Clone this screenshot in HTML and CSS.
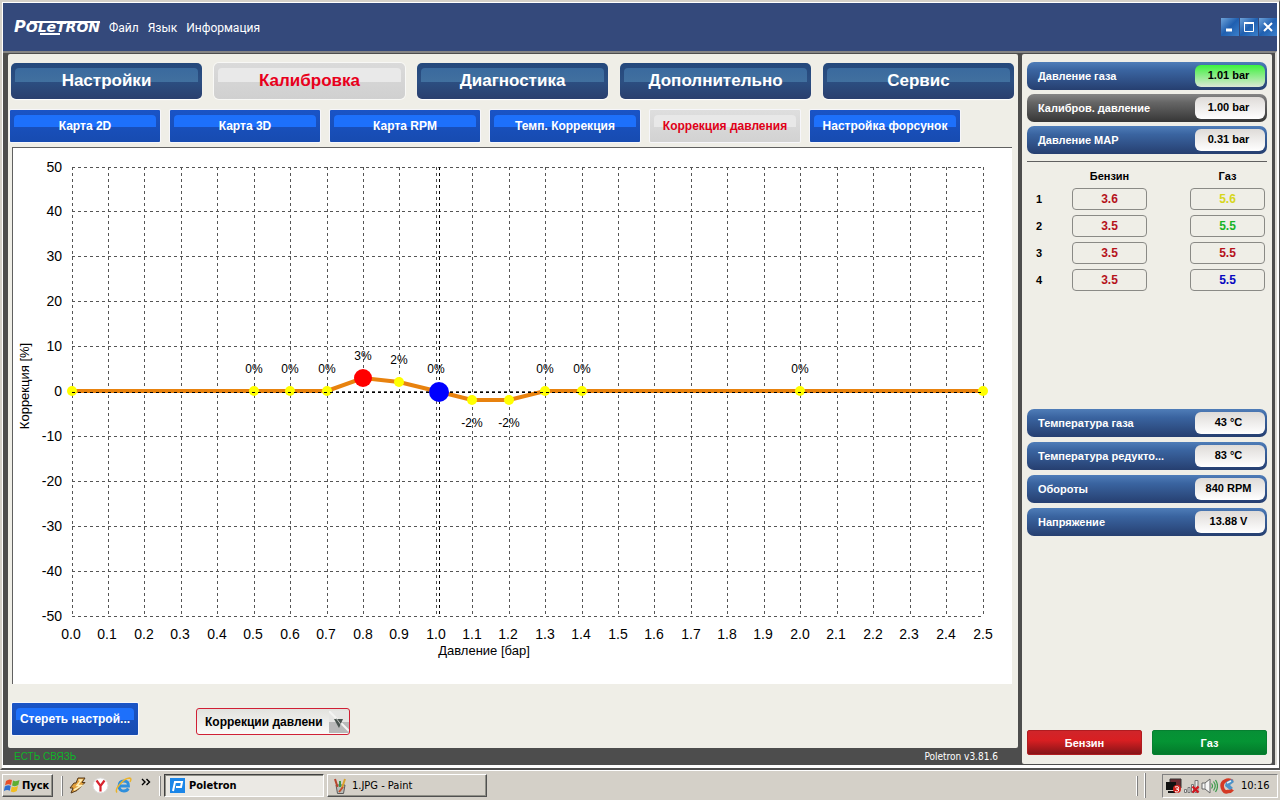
FILE: index.html
```html
<!DOCTYPE html>
<html lang="ru">
<head>
<meta charset="utf-8">
<title>Poletron</title>
<link rel="stylesheet" href="styles.css">
</head>
<body>
<div class="app">
  <header class="titlebar">
    <div class="logo"><span class="logo-cap">P</span>OLeTRON</div>
    <nav class="menu">
      <a href="#file">Файл</a>
      <a href="#lang">Язык</a>
      <a href="#info">Информация</a>
    </nav>
    <div class="winbtns">
      <button class="winbtn" aria-label="Свернуть"><svg width="18" height="18" viewBox="0 0 18 18"><path d="M5 12h6" stroke="#fff" stroke-width="3"/></svg></button>
      <button class="winbtn" aria-label="Развернуть"><svg width="18" height="18" viewBox="0 0 18 18"><path d="M4.500 5h9v8.500h-9z" fill="none" stroke="#fff"/><path d="M4 5h10" stroke="#fff" stroke-width="2"/></svg></button>
      <button class="winbtn" aria-label="Закрыть"><svg width="18" height="18" viewBox="0 0 18 18"><path d="M5 5l8 8M13 5l-8 8" stroke="#fff" stroke-width="2"/></svg></button>
    </div>
  </header>

  <div class="frame">
    <div class="left">
      <main class="panel">
        <nav class="tabs">
          <button class="tab">Настройки</button>
          <button class="tab active">Калибровка</button>
          <button class="tab">Диагностика</button>
          <button class="tab">Дополнительно</button>
          <button class="tab">Сервис</button>
        </nav>
        <nav class="subtabs">
          <button class="blue">Карта 2D</button>
          <button class="blue">Карта 3D</button>
          <button class="blue">Карта RPM</button>
          <button class="blue">Темп. Коррекция</button>
          <button class="blue active">Коррекция давления</button>
          <button class="blue">Настройка форсунок</button>
        </nav>
        <section class="chart">
          <svg class="plot" viewBox="0 0 999 536" role="img" aria-label="Коррекция давления">
            <path class="grid" d="M59 19.500h911M59 63.500h911M59 108.500h911M59 153.500h911M59 198.500h911M59 243.500h911M59 288.500h911M59 333.500h911M59 378.500h911M59 423.500h911M59 468.500h911"/>
            <path class="grid" d="M59.500 19v450M95.500 19v450M131.500 19v450M168.500 19v450M204.500 19v450M241.500 19v450M277.500 19v450M314.500 19v450M350.500 19v450M386.500 19v450M423.500 19v450M459.500 19v450M496.500 19v450M532.500 19v450M569.500 19v450M605.500 19v450M641.500 19v450M678.500 19v450M714.500 19v450M751.500 19v450M787.500 19v450M824.500 19v450M860.500 19v450M897.500 19v450M933.500 19v450M970.500 19v450"/>
            <path class="curve" d="M59 243H314L350 230L386 234L423 243L459 252H496L532 243H970"/>
            <g class="dots">
              <circle cx="59" cy="243" r="5"/><circle cx="241" cy="243" r="5"/><circle cx="277" cy="243" r="5"/><circle cx="314" cy="243" r="5"/><circle cx="386" cy="234" r="5"/><circle cx="459" cy="252" r="5"/><circle cx="496" cy="252" r="5"/><circle cx="532" cy="243" r="5"/><circle cx="569" cy="243" r="5"/><circle cx="787" cy="243" r="5"/><circle cx="970" cy="243" r="5"/>
            </g>
            <path class="cursor" d="M59 244.500h911M426.500 19v450"/>
            <circle cx="350" cy="230" r="9" fill="#f00"/>
            <circle cx="426" cy="244" r="10" fill="#00f"/>
            <g class="pts">
              <text x="241" y="225">0%</text><text x="277" y="225">0%</text><text x="314" y="225">0%</text><text x="350" y="212">3%</text><text x="386" y="216">2%</text><text x="423" y="225">0%</text><text x="459" y="279">-2%</text><text x="496" y="279">-2%</text><text x="532" y="225">0%</text><text x="569" y="225">0%</text><text x="787" y="225">0%</text>
            </g>
            <g class="ylab">
              <text x="49" y="24">50</text><text x="49" y="68">40</text><text x="49" y="113">30</text><text x="49" y="158">20</text><text x="49" y="203">10</text><text x="49" y="248">0</text><text x="49" y="293">-10</text><text x="49" y="338">-20</text><text x="49" y="383">-30</text><text x="49" y="428">-40</text><text x="49" y="473">-50</text>
            </g>
            <g class="xlab">
              <text x="58" y="491">0.0</text><text x="94" y="491">0.1</text><text x="131" y="491">0.2</text><text x="167" y="491">0.3</text><text x="204" y="491">0.4</text><text x="240" y="491">0.5</text><text x="277" y="491">0.6</text><text x="313" y="491">0.7</text><text x="350" y="491">0.8</text><text x="386" y="491">0.9</text><text x="423" y="491">1.0</text><text x="459" y="491">1.1</text><text x="495" y="491">1.2</text><text x="532" y="491">1.3</text><text x="568" y="491">1.4</text><text x="605" y="491">1.5</text><text x="641" y="491">1.6</text><text x="678" y="491">1.7</text><text x="714" y="491">1.8</text><text x="750" y="491">1.9</text><text x="787" y="491">2.0</text><text x="823" y="491">2.1</text><text x="860" y="491">2.2</text><text x="896" y="491">2.3</text><text x="933" y="491">2.4</text><text x="970" y="491">2.5</text>
            </g>
            <text class="axis" x="471" y="507">Давление [бар]</text>
            <text class="axis" transform="translate(16 238) rotate(-90)">Коррекция [%]</text>
          </svg>
        </section>
        <div class="tools">
          <button class="blue">Стереть настрой...</button>
          <label class="combo">
            <select aria-label="Режим">
              <option>Коррекции давлени</option>
            </select>
            <svg class="arrow" width="20" height="22" viewBox="0 0 20 22"><path d="M0 0h20v11H0z" fill="#e6e6e4"/><path d="M0 11h20v11H0z" fill="#b9b9b9"/><path d="M0 0l20 20" stroke="#f4f4f2" stroke-width="2"/><path d="M5 8h9l-4 9z" fill="#4a5450"/><path d="M7 7l6 8" stroke="#c8c8c6"/></svg>
          </label>
        </div>
      </main>
      <footer class="status"><span class="link-ok">ЕСТЬ СВЯЗЬ</span><span>Poletron v3.81.6</span></footer>
    </div>

    <aside class="side">
      <div class="gauges top">
        <div class="gauge"><span>Давление газа</span><output class="green">1.01 bar</output></div>
        <div class="gauge gray"><span>Калибров. давление</span><output>1.00 bar</output></div>
        <div class="gauge"><span>Давление MAP</span><output>0.31 bar</output></div>
      </div>
      <table class="inj">
        <thead><tr><th class="num"></th><th class="val">Бензин</th><th class="space"></th><th class="val">Газ</th></tr></thead>
        <tbody>
          <tr><th>1</th><td class="petrol">3.6</td><td class="space"></td><td class="yellow">5.6</td></tr>
          <tr><th>2</th><td class="petrol">3.5</td><td class="space"></td><td class="lime">5.5</td></tr>
          <tr><th>3</th><td class="petrol">3.5</td><td class="space"></td><td class="crimson">5.5</td></tr>
          <tr><th>4</th><td class="petrol">3.5</td><td class="space"></td><td class="navy">5.5</td></tr>
        </tbody>
      </table>
      <div class="gauges lower">
        <div class="gauge"><span>Температура газа</span><output>43 °C</output></div>
        <div class="gauge"><span>Температура редукто...</span><output>83 °C</output></div>
        <div class="gauge"><span>Обороты</span><output>840 RPM</output></div>
        <div class="gauge"><span>Напряжение</span><output>13.88 V</output></div>
      </div>
      <div class="fuel">
        <button class="fuelbtn red">Бензин</button>
        <button class="fuelbtn grn">Газ</button>
      </div>
    </aside>
  </div>
</div>

<div class="taskbar">
  <button class="start"><svg width="17" height="17" viewBox="0 0 17 17"><path d="M2 4q3-2.500 6-1l-1 5q-3-1.500-6 .5z" fill="#e8502a"/><path d="M9 3.500q3 1.500 6.500-.5l-1.200 5q-3 2-6.200.500z" fill="#5fae34"/><path d="M.800 9.500q3-2 6-.8l-1 5q-3-1.500-6 .5z" fill="#2f6fd0"/><path d="M7.800 9.500q3 1.500 6.200-.4l-1.200 5q-3 2-6 .4z" fill="#f2bd20"/></svg>Пуск</button>
  <span class="sep"></span>
  <div class="quick">
    <svg width="17" height="17" viewBox="0 0 17 17"><path d="M9 1h7l-3 4.500h3L8 13.500 2 16l2-5H1l4-5h2z" fill="#e2a03c" stroke="#54381a"/><path d="M9.500 3h3L8 8.500h4.500L5 13" fill="none" stroke="#fff0b8" stroke-width="1.500"/></svg>
    <svg width="17" height="17" viewBox="0 0 17 17"><circle cx="8.500" cy="8.500" r="7.500" fill="#fff" stroke="#ddd"/><path d="M4.500 3.500L8.500 9l4-5.500M8.500 9v5.500" fill="none" stroke="#d8232e" stroke-width="2.200"/></svg>
    <svg width="17" height="17" viewBox="0 0 17 17"><path d="M4 9h9.500q0-5-4.700-5T4 9.300Q4.200 14 9 14q3 0 4.300-2.500" fill="none" stroke="#2f8fdc" stroke-width="2.800"/><path d="M2 15.500C-1 12 9 1 14.500 1q2.500.3.500 4" fill="none" stroke="#eab32c" stroke-width="1.500"/></svg>
    <svg class="more" width="10" height="8" viewBox="0 0 10 8"><path d="M1 1l3 3-3 3M5.500 1l3 3-3 3" fill="none" stroke="#000" stroke-width="1.400"/></svg>
  </div>
  <span class="sep"></span>
  <button class="task current"><svg width="15" height="15" viewBox="0 0 15 15"><path d="M0 0h15v15H0z" fill="#1b86e8"/><path d="M3 13l2-9h7l-1 5H6" fill="none" stroke="#fff" stroke-width="2"/></svg>Poletron</button>
  <button class="task"><svg width="15" height="16" viewBox="0 0 15 16"><path d="M3 7h9l-1.500 8.500h-6z" fill="#b9bdb8" stroke="#5b5b5b"/><path d="M4.500 9L2 1" stroke="#b5452c" stroke-width="2"/><path d="M7 9V3" stroke="#3a9a4a" stroke-width="2"/><path d="M9 10l3-9" stroke="#d9a12c" stroke-width="2"/><path d="M6 14l4-5" stroke="#c4502c" stroke-width="2"/></svg>1.JPG - Paint</button>
  <span class="spacer"></span>
  <span class="sep"></span>
  <span class="sep dark"></span>
  <div class="tray">
    <svg width="17" height="16" viewBox="0 0 17 16"><path d="M5 1h11v9H5z" fill="#6d2b31" stroke="#333"/><path d="M1 4h10v8H1z" fill="#111"/><path d="M3 14h7" stroke="#111" stroke-width="2"/><circle cx="12" cy="11" r="4" fill="#d4231c"/><path d="M10 9q4-1 3.500 1t-2 1q3 0 2 2t-3.500.5" fill="none" stroke="#fff"/></svg>
    <svg width="17" height="16" viewBox="0 0 17 16"><path d="M1.500 11.500h2v3h-2zM5 9.500h2v5H5zM8.500 6.500h2v8h-2zM12 2.500h3v12h-3z" fill="#e8e8e8" stroke="#777"/><path d="M9.500 8.500l6 6M15.500 8.500l-6 6" stroke="#d01820" stroke-width="2.400"/></svg>
    <svg width="17" height="16" viewBox="0 0 17 16"><path d="M1 5h3l5-4v14l-5-4H1z" fill="#f6f6f6" stroke="#666"/><path d="M4 5v6" stroke="#888"/><path d="M10.500 5.500q2 2.500 0 5M12.500 3.500q3.500 4.500 0 9M14.500 2q4 6 0 12" fill="none" stroke="#3b9a4a" stroke-width="1.200"/></svg>
    <svg width="17" height="16" viewBox="0 0 17 16"><path d="M13.500 3.500Q10 1 6 3T3.500 10t5.500 3.500q3 0 4.500-2" fill="none" stroke="#d43a25" stroke-width="3.600"/><path d="M7 4l6-3 2 3-4 3 3 3-3 2-5-4z" fill="#4c92c8"/><path d="M8 5l4-2" stroke="#e8f0f5" stroke-width="1.500"/></svg>
    <time>10:16</time>
  </div>
</div>
</body>
</html>
```

FILE: styles.css
```css
* { box-sizing: border-box; }

body {
  margin: 0;
  min-height: 100vh;
  display: flex;
  flex-direction: column;
  background: #d4d0c8;
  font-family: "Liberation Sans", Arial, sans-serif;
  font-size: 12px;
  color: #000;
}

button { font-family: inherit; padding: 0; margin: 0; white-space: nowrap; }

/* Window */
.app {
  flex: 1;
  display: flex;
  flex-direction: column;
  border: 2px solid #d4d0c8;
  border-bottom: 2px solid #505050;
  border-right: 1px solid #505050;
  background: #fff;
  padding: 1px 2px 3px 1px;
}

.titlebar {
  height: 48px;
  flex: none;
  display: flex;
  align-items: center;
  background: #34497b;
  padding-left: 11px;
}

.logo {
  position: relative;
  width: 86px;
  margin-right: 9px;
  color: #fff;
  font: italic bold 14px/18px "DejaVu Sans", sans-serif;
  white-space: nowrap;
}
.logo-cap { font-size: 16px; }
.logo::before, .logo::after {
  content: "";
  position: absolute;
  background: #fff;
  height: 2px;
}
.logo::before { left: 16px; right: 0; top: 3px; }
.logo::after { left: 26px; width: 20px; bottom: 1px; }

.menu { display: flex; gap: 9px; padding-top: 2px; }
.menu a {
  color: #fff;
  text-decoration: none;
  font: 12px/18px Roboto, "Noto Sans", sans-serif;
}

.winbtns { margin-left: auto; display: flex; gap: 1px; }
.winbtn {
  width: 18px;
  height: 18px;
  border: 0;
  background: linear-gradient(135deg, #6fa3da, #1f5fb0 50%, #3a80cc);
}
.winbtn svg { display: block; }

.frame {
  flex: 1;
  display: flex;
  gap: 4px;
  border-top: 2px solid #858585;
  border-right: 2px solid #dedcd6;
  background: #4d4d4d;
  padding: 1px 3px 1px 5px;
}

.left { flex: 1; min-width: 0; display: flex; flex-direction: column; }

.panel {
  flex: 1;
  display: flex;
  flex-direction: column;
  background: #efeee7;
  border-radius: 2px;
  padding: 9px 6px 13px 3px;
}

/* Tabs */
.tabs { display: grid; grid-template-columns: repeat(5, 1fr); gap: 12px; margin-right: -2px; }
.tab {
  position: relative;
  z-index: 0;
  height: 36px;
  border: 0;
  border-radius: 5px;
  background: linear-gradient(#24487c, #2c4f82 50%, #2a3f6e);
  box-shadow: 0 1px 1px #fff;
  color: #fff;
  font-size: 17px;
  font-weight: bold;
}
.tab::before, .blue::before {
  content: "";
  position: absolute;
  z-index: -1;
  left: 4px;
  right: 4px;
  top: 5px;
  height: 14px;
  border-radius: 4px 4px 0 0;
}
.tab::before { background: linear-gradient(#3a6a9e, #41709f); }
.tab.active { background: linear-gradient(#dadada, #d0d0d0); color: #e8001c; box-shadow: 0 0 0 1px #f8f8f6; }
.tab.active::before { background: #e9e9e9; }

.subtabs {
  display: grid;
  grid-template-columns: repeat(6, minmax(0, 150fr)) 42fr;
  gap: 10px;
  margin: 11px 0 5px -1px;
}
.blue {
  position: relative;
  z-index: 0;
  height: 32px;
  border: 0;
  border-radius: 1px;
  background: linear-gradient(#1a54c6, #174bb0);
  box-shadow: 0 0 0 1px #f6f6fa;
  color: #fff;
  font-size: 12px;
  font-weight: bold;
}
.blue::before { height: 12px; background: #1d70fb; }
.blue.active { background: linear-gradient(#dedede, #d2d2d2); color: #e00018; }
.blue.active::before { background: #e8e8e8; }

/* Chart */
.chart {
  flex: 1;
  margin-left: 1px;
  border-left: 1px solid #606060;
  border-top: 1px solid #606060;
  background: #fff;
}
.plot { display: block; width: 100%; }
.plot text { fill: #000; }
.grid { stroke: #555; stroke-dasharray: 3 3; fill: none; }
.cursor { stroke: #000; stroke-dasharray: 3 3; fill: none; }
.curve { stroke: #e8820e; stroke-width: 4; fill: none; }
.dots { fill: #ff0; }
.pts { font-size: 12px; text-anchor: middle; }
.ylab { font-size: 14px; text-anchor: end; }
.xlab { font-size: 14px; text-anchor: middle; }
.axis { font-size: 13px; text-anchor: middle; }

.tools { display: flex; align-items: center; gap: 58px; padding: 18px 0 0 1px; }
.tools .blue { width: 126px; }
.combo {
  display: flex;
  align-items: center;
  width: 154px;
  height: 27px;
  margin-top: 6px;
  border: 1px solid #d02035;
  border-radius: 3px;
  background: linear-gradient(#e2e2de, #fafaf8);
}
.combo select {
  flex: 1;
  min-width: 0;
  height: 24px;
  border: 0;
  padding: 0 0 0 8px;
  appearance: none;
  background: transparent;
  color: #000;
  font: bold 12px "Liberation Sans", Arial, sans-serif;
}
.arrow { flex: none; }

.status {
  height: 16px;
  display: flex;
  align-items: center;
  justify-content: space-between;
  padding: 0 20px 0 6px;
  color: #fff;
  font-size: 10px;
}
.status span:last-child { font-family: "DejaVu Sans Condensed", "DejaVu Sans", sans-serif; }
.link-ok { color: #0fb428; }

/* Sidebar */
.side {
  width: 250px;
  flex: none;
  display: flex;
  flex-direction: column;
  background: #efeee7;
  border-radius: 2px;
  padding: 8px 5px 9px;
  font-size: 11px;
  font-weight: bold;
}
.gauges { display: flex; flex-direction: column; gap: 5px; }
.gauge {
  height: 28px;
  display: flex;
  align-items: center;
  justify-content: space-between;
  padding: 0 2px 0 11px;
  border-radius: 7px;
  background: linear-gradient(#4f7db8, #3a64a0 30%, #263f70);
  color: #fff;
}
.gauge.gray { background: linear-gradient(#858585, #666 30%, #363636); }
.gauge output {
  width: 70px;
  height: 22px;
  line-height: 21px;
  border-radius: 6px;
  background: linear-gradient(#dedbd8, #fff);
  color: #000;
  text-align: center;
  padding-right: 3px;
}
.gauge output.green { background: linear-gradient(#3df23d, #dce8d6); }
.gauges.top { gap: 4px; padding-bottom: 7px; border-bottom: 1px solid #606060; }

.inj {
  width: 238px;
  margin: 2px 0 113px;
  border-collapse: separate;
  border-spacing: 0 5px;
  table-layout: fixed;
}
.inj th, .inj td { height: 22px; padding: 0; text-align: center; }
.inj thead th { height: 14px; }
.inj .num { width: 45px; }
.inj tbody th { text-align: left; padding-left: 9px; }
.inj .val { width: 75px; }
.inj td { border: 1px solid #8a8a86; border-radius: 4px; font-size: 12px; }
.inj td.space { border: 0; }
.petrol, .crimson { color: #b5121b; }
.yellow { color: #d6d61c; }
.lime { color: #18b428; }
.navy { color: #0808c0; }

.fuel { display: grid; grid-template-columns: 1fr 1fr; gap: 10px; margin-top: auto; }
.fuelbtn {
  height: 25px;
  border: 1px solid;
  border-radius: 2px;
  color: #fff;
  font-size: 11px;
  font-weight: bold;
}
.red { background: linear-gradient(#d0252a, #d81f22 40%, #861418); border-color: #b01c20; }
.grn { background: linear-gradient(#079036, #059434 45%, #037a2b); border-color: #068030; }

/* Taskbar */
.taskbar {
  height: 31px;
  flex: none;
  display: flex;
  align-items: center;
  gap: 8px;
  border-top: 1px solid #fff;
  padding: 0 2px 1px;
  background: #d4d0c8;
  font: 11px "DejaVu Sans Condensed", "DejaVu Sans", sans-serif;
}
.start, .task {
  display: flex;
  align-items: center;
  height: 23px;
  background: #d4d0c8;
  border: 1px solid;
  border-color: #fff #505050 #505050 #fff;
  box-shadow: inset -1px -1px #909088;
  font-size: 11px;
  color: #000;
}
.start { width: 51px; font-weight: bold; gap: 1px; padding-left: 1px; }
.sep { width: 2px; height: 20px; border-left: 1px solid #fff; border-right: 1px solid #808080; }
.sep.dark { margin-left: -2px; height: 25px; }
.quick { display: flex; align-items: center; gap: 6px; margin-left: -2px; }
.more { margin: 0 0 8px 3px; }
.task { width: 160px; gap: 4px; padding-left: 5px; margin-left: -5px; }
.task.current {
  border-color: #404040 #fff #fff #404040;
  box-shadow: inset 1px 1px #909088;
  background: #ebe9e4;
  font-weight: bold;
}
.spacer { flex: 1; }
.tray {
  display: flex;
  align-items: center;
  gap: 1px;
  width: 116px;
  height: 24px;
  margin-left: 8px;
  padding-left: 2px;
  border: 1px solid;
  border-color: #808080 #fff #fff #808080;
}
.tray time { margin-left: 4px; }
```
